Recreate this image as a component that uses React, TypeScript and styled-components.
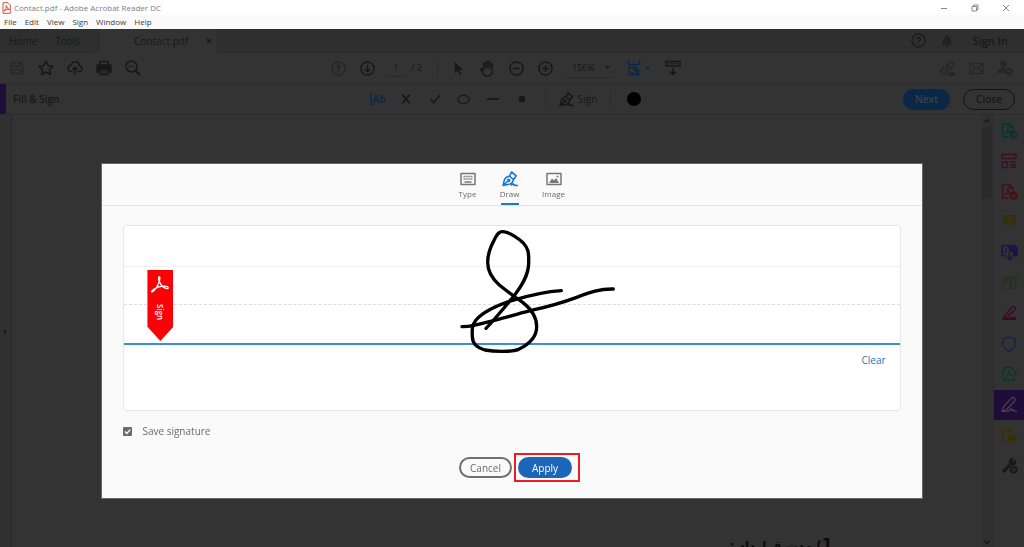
import React from "react";
import styled, { createGlobalStyle } from "styled-components";

const ink = "#181818";
const faint = "#262626";
const blue = "#0b2748";

const GlobalStyle = createGlobalStyle`
  * { box-sizing: border-box; }
  body {
    margin: 0;
    background: #333;
    font-family: "Open Sans", "Noto Sans", "Liberation Sans", sans-serif;
    font-size: 10px;
    line-height: 14px;
    overflow: hidden;
  }
  button, input, select {
    font: inherit;
    color: inherit;
    border: 0;
    padding: 0;
    margin: 0;
    background: none;
  }
  svg { display: block; flex: none; }
`;

const Shell = styled.div`
  display: flex;
  flex-direction: column;
  height: 100vh;
  color: ${ink};
`;

const TitleBar = styled.header`
  display: flex;
  align-items: center;
  gap: 3px;
  height: 15px;
  padding: 0 14px 0 2px;
  background: #fff;
  color: #7d7d7d;
`;

const AppTitle = styled.h1`
  flex: 1;
  margin: 0;
  font-size: 8px;
  font-weight: 400;
`;

const WindowControls = styled.div`
  display: flex;
  gap: 23px;
  color: #888;
`;

const MenuBar = styled.nav`
  display: flex;
  align-items: center;
  gap: 8px;
  height: 14px;
  padding: 0 4px;
  background: #fafafa;
  color: #3c3c3c;
  font-size: 8px;
`;

const TabBar = styled.nav`
  display: flex;
  align-items: stretch;
  height: 24px;
  background: #2f2f2f;
`;

const NavTab = styled.button`
  padding: 0 9px;
  border-bottom: 1px solid #2a2a2a;
`;

const DocTab = styled.div`
  display: flex;
  align-items: center;
  justify-content: space-between;
  width: 120px;
  margin-left: 9px;
  padding: 0 5px 0 35px;
  background: #333;
  border-left: 1px solid #2a2a2a;
  border-right: 1px solid #2a2a2a;
`;

const Account = styled.div`
  display: flex;
  flex: 1;
  align-items: center;
  justify-content: flex-end;
  gap: 8px;
  padding-right: 16px;
  border-bottom: 1px solid #2a2a2a;
`;

const SignIn = styled.button`
  margin-left: 8px;
  font-size: 11px;
  font-weight: 600;
`;

const Bar = styled.div<{ $height: number }>`
  display: grid;
  grid-template-columns: 1fr auto 1fr;
  align-items: center;
  height: ${(p) => p.$height}px;
  border-bottom: 1px solid #2c2c2c;
`;

const Group = styled.div<{ $place: "left" | "center" | "right" }>`
  display: flex;
  align-items: center;
  gap: 9px;
  justify-content: ${(p) => (p.$place === "right" ? "flex-end" : "flex-start")};
  padding-left: ${(p) => (p.$place === "left" ? 7 : 0)}px;
  padding-right: ${(p) => (p.$place === "right" ? 9 : p.$place === "center" ? 13 : 0)}px;
`;

const ToolButton = styled.button<{ $color?: string; $width?: number }>`
  display: flex;
  align-items: center;
  justify-content: center;
  gap: 4px;
  min-width: ${(p) => p.$width ?? 20}px;
  height: 20px;
  color: ${(p) => p.$color ?? ink};
`;

const Divider = styled.span<{ $space: number }>`
  width: 1px;
  height: 19px;
  margin: 0 ${(p) => p.$space}px;
  background: #2b2b2b;
`;

const PageCount = styled.label`
  display: flex;
  align-items: center;
  gap: 5px;
  width: 41px;
  font-size: 9px;
  white-space: nowrap;
`;

const PageInput = styled.input`
  width: 20px;
  height: 18px;
  text-align: center;
  border-bottom: 1px solid #292929;
`;

const ZoomField = styled.label`
  display: flex;
  align-items: center;
  width: 50px;
  border-bottom: 1px solid #292929;
`;

const ZoomSelect = styled.select`
  appearance: none;
  width: 41px;
  height: 18px;
  padding-left: 8px;
  font-size: 9px;
`;

const BarTitle = styled.h2`
  display: flex;
  align-items: center;
  align-self: stretch;
  margin: 0;
  padding-left: 7px;
  border-left: 6px solid #1f0c38;
  font-size: 10px;
  font-weight: 600;
`;

const Pill = styled.button<{ $kind: "next" | "close" | "cancel" | "apply" }>`
  height: 21px;
  border-radius: 11px;
  font-size: 10px;
  line-height: 16px;
  ${(p) =>
    ({
      next: `width: 47px; background: ${blue}; color: #3b4148; font-weight: 600;`,
      close: `width: 52px; margin-left: 4px; border: 1px solid #131313; font-weight: 600;`,
      cancel: `width: 53px; border: 2px solid #707070; color: #6a6a6a;`,
      apply: `width: 54px; background: #1b66b8; color: #fff;`,
    })[p.$kind]}
`;

const Workspace = styled.main`
  display: flex;
  flex: 1;
  min-height: 0;
`;

const PanelToggle = styled.button`
  width: 12px;
  background: #303030;
  border-right: 1px solid #2a2a2a;
  display: flex;
  align-items: center;
  justify-content: center;
`;

const Page = styled.article`
  flex: 1;
  overflow: hidden;
  padding: 417px 148px 0 0;
  font: 700 12px/26px "DejaVu Sans", sans-serif;
  color: #0c0c0c;
`;

const Heading = styled.p`
  margin: 0;
`;

const HeadingNumber = styled.span`
  font-size: 16px;
`;

const ScrollTrack = styled.div`
  display: flex;
  flex-direction: column;
  align-items: center;
  width: 13px;
  padding: 3px 0 2px;
  background: #303030;
  border-right: 1px solid #2b2b2b;
`;

const ScrollThumb = styled.div`
  width: 10px;
  height: 72px;
  margin: 3px 0 auto;
  background: #2a2a2a;
`;

const ToolRail = styled.aside`
  width: 30px;
`;

const ToolList = styled.div`
  display: flex;
  flex-direction: column;
  height: 366px;
`;

const RailButton = styled.button<{ $color: string; $active?: boolean }>`
  display: flex;
  flex: 1;
  align-items: center;
  justify-content: center;
  color: ${(p) => p.$color};
  background: ${(p) => (p.$active ? "#1f0c38" : "transparent")};
`;

const Overlay = styled.div`
  position: fixed;
  inset: 0;
  display: flex;
  align-items: flex-start;
  justify-content: center;
  padding-top: 164px;
`;

const Dialog = styled.section`
  width: 80%;
  background: #fafafa;
  color: #6a6a6a;
  box-shadow: 0 0 0 1px #666;
`;

const ModeTabs = styled.div`
  display: flex;
  justify-content: center;
  gap: 24px;
  height: 42px;
  padding-right: 1px;
  border-bottom: 1px solid #e4e4e4;
`;

const ModeTab = styled.button<{ $active?: boolean; $wide?: boolean }>`
  display: flex;
  flex-direction: column;
  align-items: center;
  gap: 1px;
  width: ${(p) => (p.$wide ? 22 : 18)}px;
  padding-top: 7px;
  font-size: 8px;
  line-height: 12px;
  border-bottom: 2px solid ${(p) => (p.$active ? "#1a78d6" : "transparent")};
  svg { color: ${(p) => (p.$active ? "#1a78d6" : "#777")}; }
`;

const DialogBody = styled.div`
  padding: 19px 21px 16px;
`;

const SignatureBox = styled.div`
  position: relative;
  height: 186px;
  background: #fff;
  border: 1px solid #e6e6e6;
  border-radius: 4px;
`;

const GuideRow = styled.div<{ $line: string; $height: number }>`
  height: ${(p) => p.$height}px;
  border-bottom: ${(p) => p.$line};
`;

const ClearRow = styled.div`
  display: flex;
  justify-content: flex-end;
  padding: 8px 14px;
`;

const ClearLink = styled.a`
  color: #2a73bb;
  text-decoration: none;
`;

const Ribbon = styled.div`
  position: absolute;
  left: 23px;
  top: 44px;
  display: flex;
  flex-direction: column;
  align-items: center;
  gap: 9px;
  width: 26px;
  height: 71px;
  padding-top: 5px;
  background: #fb0007;
  color: #fff;
  clip-path: polygon(0 0, 100% 0, 100% 80%, 50% 100%, 0 80%);
`;

const RibbonText = styled.span`
  writing-mode: vertical-rl;
  font-size: 8px;
  line-height: 10px;
  font-weight: 600;
`;

const Ink = styled.svg`
  position: absolute;
  left: calc(50% - 54px);
  top: 2px;
`;

const SaveLabel = styled.label`
  display: flex;
  align-items: center;
  gap: 10px;
  margin-top: 13px;
`;

const Checkbox = styled.input`
  appearance: none;
  width: 9px;
  height: 9px;
  border-radius: 1px;
  background: #6b6b6b
    url("data:image/svg+xml,%3Csvg xmlns='http://www.w3.org/2000/svg' viewBox='0 0 9 9'%3E%3Cpath d='M2 4.6 3.8 6.4 7.2 2.6' fill='none' stroke='white' stroke-width='1.4'/%3E%3C/svg%3E");
`;

const Actions = styled.div`
  display: flex;
  align-items: center;
  justify-content: center;
  gap: 2px;
  margin: 15px 0 0 15px;
`;

const Highlight = styled.div`
  display: flex;
  width: 66px;
  padding: 2px;
  border: 2px solid #ee1c25;
`;

type IconProps = { size?: number; width?: number; sw?: number; vb?: string; children: React.ReactNode };
const Icon = ({ size = 16, width, sw = 1.5, vb = "0 0 16 16", children }: IconProps) => (
  <svg width={width ?? size} height={size} viewBox={vb} fill="none" stroke="currentColor" strokeWidth={sw} strokeLinejoin="round" aria-hidden="true">
    {children}
  </svg>
);

const acrobat =
  "M3 20C6 18.500 10 12.500 11.300 7C12.200 3.300 11.800 2 11 2S9.700 4.500 11.500 8.500C13.400 12.700 17 16 20 16.400C22.500 16.600 22.700 14.200 19.500 13.700C15 13 8.500 14.500 4.500 17.200C1.500 19.300 1.500 21 3 20Z";
const AcrobatMark = ({ size, sw = 1.6 }: { size: number; sw?: number }) => (
  <Icon size={size} sw={sw} vb="0 0 24 24">
    <path d={acrobat} />
  </Icon>
);

const Caret = () => (
  <svg width="5" height="3" viewBox="0 0 5 3" fill="currentColor" aria-hidden="true">
    <path d="M0 0h5L2.500 3z" />
  </svg>
);

const Pen = ({ size }: { size: number }) => (
  <Icon size={size} sw={1.6}>
    <path d="M1 14.500 2.500 8.500Q3.500 6 7.500 5l4 3.500Q11 12 8 13L1 14.500 6 10M7.500 5 9.500 1l4.800 3.800L11.500 8.500" />
    <circle cx="6.700" cy="9.300" r="1.100" />
    <path d="M9 14.500c1-1.800 2.200-2 2.400-1.200s.8 1.300 1.600.5l.4.700H16" />
  </Icon>
);

const FileShape = ({ children }: { children?: React.ReactNode }) => (
  <Icon size={17} sw={1.5}>
    <path d="M7 14H1.500V1.500h6.500L11.500 5v3M8 1.500V5h3.500" />
    <path d="M3.500 11C5.500 9.500 6.500 7 6.200 5c.4 2.500 2 4 3.800 4-3 0-4.500.7-6.500 2z" strokeWidth="1" />
    {children}
  </Icon>
);

const railTools: { name: string; color: string; active?: boolean; icon: React.ReactNode }[] = [
  { name: "Export PDF", color: "#0a3430", icon: <FileShape><circle cx="12" cy="12" r="3.800" fill="currentColor" stroke="none" /><path d="M10 12h4M12.500 10.500 14 12l-1.500 1.500" stroke="#333" strokeWidth="1" /></FileShape> },
  { name: "Organize", color: "#3c0e29", icon: <Icon><path d="M1 1.500h14v4H1zM1 9h5.500v5.500H1zM9.500 9H15M9.500 11.700H15M9.500 14.300H15" /></Icon> },
  { name: "Create PDF", color: "#421216", icon: <FileShape><circle cx="12" cy="12" r="3.800" fill="currentColor" stroke="none" /><path d="M10 12h4M12 10v4" stroke="#333" strokeWidth="1" /></FileShape> },
  { name: "Comment", color: "#383000", icon: <Icon size={15}><path d="M1 1h14v10H9l-3.500 4v-4H1z" fill="currentColor" stroke="none" /><path d="M4 4.500h8M4 7.500h6" stroke="#333" /></Icon> },
  { name: "Combine", color: "#191747", icon: <Icon size={17}><path d="M5 11H1V1.500h7v5M11 11h4V3.500L13 1.500H8.500M8 8v6.500M5.500 12 8 14.800l2.500-2.800" /><path d="M9 2h4l2 2v6h-3V7H9z" fill="currentColor" /><path d="M3 8.500Q5.500 6.500 5 3.500" strokeWidth="1" /></Icon> },
  { name: "Compress", color: "#1d3512", icon: <Icon size={15}><path d="M10 1.500h4.500v13H10z" /><path d="M1.500 8H8v6.500H1.500z" strokeDasharray="2 1" /><path d="M8 3H3.500v3M1.500 4.500l2 2 2-2" /></Icon> },
  { name: "Redact", color: "#400827", icon: <Icon><path d="M3 11.500 11 2q1.500-1 2.700 0t.3 2.700L6 12.500H3z" /><path d="M1 14.500 2.500 12H6l2 1.500 1-1.500h6v3H1z" fill="currentColor" stroke="none" /></Icon> },
  { name: "Protect", color: "#201f4a", icon: <Icon><path d="M8 1q3 1.700 6 1.700v5Q14 12.500 8 15 2 12.500 2 7.700v-5Q5 2.700 8 1z" /></Icon> },
  { name: "Optimize", color: "#0a3430", icon: <Icon><path d="M3 5V1.500h7.500L13 4v1M3 11v3.500h10V11M.5 5.500 3 8 .5 10.500M15.500 5.500 13 8l2.500 2.500" /><path d="M5 11Q8 8.500 8 5q.5 3.500 3.500 4.500Q8 9 5 11z" strokeWidth="1" /></Icon> },
  { name: "Fill & Sign", color: "#47404e", active: true, icon: <Icon size={17} sw={1.3}><path d="M1 14.500 2.500 10 10 2q1.500-1.200 2.700 0t.2 2.700L5.500 12.500 1 14.500h6c2-3 3-3 3-1.500s1 1 1.700 0c.3 1.500 1 1.500 3.300 1.300" /></Icon> },
  { name: "Send for Comments", color: "#383000", icon: <Icon><path d="M7 14.500H1.500v-13H7L10 4.500V8M7 1.500v3h3" /><path d="M8 9h7v4h-2.500L11 15v-2H8z" fill="currentColor" /></Icon> },
  { name: "More Tools", color: ink, icon: <Icon size={17}><path d="M2 14 8.500 7.500" strokeWidth="3" /><path d="M13.500 3 11.500 5 10 3.500l2-2q-3-.8-4 1.500T9 7t4 0 .5-4z" fill="currentColor" strokeWidth=".8" /><circle cx="12" cy="12" r="4" fill="currentColor" stroke="#333" strokeWidth=".6" /><path d="M10 12h4M12 10v4" stroke="#333" strokeWidth="1" /></Icon> },
];

export default function App() {
  return (
    <>
      <GlobalStyle />
      <Shell>
        <TitleBar>
          <svg width="9" height="12" viewBox="0 0 9 12" fill="none" stroke="#e2483d" aria-hidden="true">
            <path d="M1 .7h5L8.300 3v8.300H1z" fill="#fff" />
            <path d="M2 9Q4.500 7 4.300 3.500 5 7 7.500 7.500 4.500 7 2 9z" />
          </svg>
          <AppTitle>Contact.pdf - Adobe Acrobat Reader DC</AppTitle>
          <WindowControls>
            <button aria-label="Minimize"><Icon size={8} sw={1} vb="0 0 8 8"><path d="M1 4.500h6" /></Icon></button>
            <button aria-label="Restore"><Icon size={8} sw={1} vb="0 0 8 8"><path d="M1 2.500h4.500V7H1zM2.500 2.500V1H7v4.500H5.500" /></Icon></button>
            <button aria-label="Close window"><Icon size={8} sw={1} vb="0 0 8 8"><path d="m1 1 6 6M7 1 1 7" /></Icon></button>
          </WindowControls>
        </TitleBar>
        <MenuBar>
          {["File", "Edit", "View", "Sign", "Window", "Help"].map((m) => (
            <button key={m}>{m}</button>
          ))}
        </MenuBar>
        <TabBar>
          <NavTab>Home</NavTab>
          <NavTab>Tools</NavTab>
          <DocTab>
            <span>Contact.pdf</span>
            <button aria-label="Close tab"><Icon size={6} sw={1.2} vb="0 0 6 6"><path d="m1 1 4 4M5 1 1 5" /></Icon></button>
          </DocTab>
          <Account>
            <ToolButton aria-label="Help">
              <Icon size={15} sw={1.3}><circle cx="8" cy="8" r="7" /><path d="M6 6.500Q6 4.700 8 4.700t2 1.700Q10 7.500 8 8.700v1M8 10.700v1.400" /></Icon>
            </ToolButton>
            <ToolButton aria-label="Notifications" $color="#222">
              <Icon size={14}><path d="M1.500 12.500q2-1.500 2-5T7 3V1h2v2q3.500 1 3.500 4.500t2 5zM6 13.500h4q-.5 2-2 2t-2-2z" fill="currentColor" stroke="none" /></Icon>
            </ToolButton>
            <SignIn>Sign In</SignIn>
          </Account>
        </TabBar>

        <Bar $height={31}>
          <Group $place="left">
            <ToolButton aria-label="Save" $color={faint}><Icon size={14}><path d="M1.500 1.500h10l3 3v10h-13zM4.500 1.500V6h6V1.500M4 14.500V9.500h8v5" /></Icon></ToolButton>
            <ToolButton aria-label="Favourite"><Icon><path d="m8 1 2.100 4.700 5.100.5-3.900 3.400 1.200 5L8 12l-4.500 2.600 1.200-5L.8 6.200l5.100-.5z" /></Icon></ToolButton>
            <ToolButton aria-label="Upload"><Icon><path d="M5.500 11.500H4Q1 11 1 8.300T4 5.400Q5 1.700 8.500 1.700T12.500 6q2.600.3 2.600 2.800T12 11.500h-1.500M8 15V7.500M5.500 9.700 8 7.200l2.500 2.500" /></Icon></ToolButton>
            <ToolButton aria-label="Print"><Icon><path d="M4 5V1.500h8V5" /><path d="M1 5h14v7H1z" fill="currentColor" /><path d="M4 9.500h8v5H4z" fill="#333" /><path d="M6 11h4M6 12.800h4" strokeWidth=".9" /></Icon></ToolButton>
            <ToolButton aria-label="Find"><Icon><circle cx="6.500" cy="6.500" r="5.500" /><path d="m10.500 10.500 4.700 4.700" strokeWidth="2" /><path d="M3.700 6.500h5.600" strokeDasharray="1.300 .8" /></Icon></ToolButton>
          </Group>
          <Group $place="center">
            <ToolButton aria-label="Previous page" $color={faint}><Icon size={15}><circle cx="8" cy="8" r="7" /><path d="M8 12V4.500M5 7.500l3-3 3 3" /></Icon></ToolButton>
            <ToolButton aria-label="Next page"><Icon size={15}><circle cx="8" cy="8" r="7" /><path d="M8 4v7.500M5 8.500l3 3 3-3" /></Icon></ToolButton>
            <PageCount><PageInput defaultValue="1" aria-label="Page" /> / 2</PageCount>
            <Divider $space={1} />
            <ToolButton aria-label="Select"><Icon size={15}><path d="M4 1v12l3-2.700 2 4.500 1.800-.8-2-4.400H13z" fill="currentColor" stroke="none" /></Icon></ToolButton>
            <ToolButton aria-label="Pan"><Icon size={17} sw={1.300}><path d="M4.500 9.500V3.500q.9-1.300 1.900 0V7.500 2q1-1.300 2 0v5.500V2.200q1-1.200 2 0V8 4q1-1 2 0v6.500q0 4.500-4.500 4.500-3 0-4-2.500L1.700 9.200q0-1.500 1.600-.8z" /></Icon></ToolButton>
            <ToolButton aria-label="Zoom out"><Icon size={15}><circle cx="8" cy="8" r="7" /><path d="M4.500 8h7" /></Icon></ToolButton>
            <ToolButton aria-label="Zoom in"><Icon size={15}><circle cx="8" cy="8" r="7" /><path d="M4.500 8h7M8 4.500v7" /></Icon></ToolButton>
            <ZoomField><ZoomSelect aria-label="Zoom level"><option>156%</option></ZoomSelect><Caret /></ZoomField>
            <ToolButton aria-label="Fit width" $color={blue} $width={31}>
              <Icon size={17} width={14} vb="0 0 14 17"><path d="M1.500 0v4.500h11V0M2 16V7.500h6.500l3 3V16M8 7.500v3.500h3.500M4 14h6.500M5.500 12.500 4 14l1.500 1.500M9 12.500l1.500 1.500L9 15.500" /></Icon>
              <Caret />
            </ToolButton>
            <ToolButton aria-label="Show toolbar"><Icon size={16}><path d="M1 1.500h14v4.500H1z" /><path d="M3.500 3.800h9" strokeDasharray="1.500 1" /><path d="M8 7.500V14M5 11.500l3 3 3-3" /></Icon></ToolButton>
          </Group>
          <Group $place="right">
            <ToolButton aria-label="Share link" $color={faint}><Icon size={17}><path d="m6 9.500 4-4M7 5.500l3-3q2-1.200 3.300 0t0 3.300l-3 3M8.500 10 6 12.500q-2 1.300-3.500 0t0-3.500L5 6.500" /><path d="M8.500 15q-1.200-2.500 1.300-3 1.700-3 3.700 0 2.500.2 2 3z" fill="currentColor" stroke="none" /></Icon></ToolButton>
            <ToolButton aria-label="Email" $color={faint}><Icon size={15}><path d="M1 2.500h14v11H1zL8 9l7-6.500M1 13.500 6 8M15 13.500 10 8" strokeWidth="1.200" /></Icon></ToolButton>
            <ToolButton aria-label="Share with people" $color={faint}><Icon size={16}><circle cx="6.500" cy="4" r="3.300" fill="currentColor" stroke="none" /><path d="M0 13q0-4 5-4.500V6h3v3l1 4z" fill="currentColor" stroke="none" /><circle cx="12" cy="11.500" r="3.800" fill="currentColor" stroke="none" /><path d="M10 11.500h4M12 9.500v4" stroke="#333" strokeWidth="1" /></Icon></ToolButton>
          </Group>
        </Bar>

        <Bar $height={31}>
          <BarTitle>Fill &amp; Sign</BarTitle>
          <Group $place="center">
            <ToolButton aria-label="Add text" $color={blue}>
              <svg width="18" height="14" viewBox="0 0 18 14" aria-hidden="true">
                <path d="M1 1.500h4M3 1.500v11M1 12.500h4" stroke="currentColor" strokeWidth="1.200" fill="none" />
                <text x="4.500" y="11" fontSize="10" fontWeight="700" fill="currentColor">Ab</text>
              </svg>
            </ToolButton>
            <ToolButton aria-label="Cross"><Icon size={10} sw={2.500}><path d="m2 1 12 14M14 1 2 15" /></Icon></ToolButton>
            <ToolButton aria-label="Check"><Icon size={12} sw={2.400}><path d="m2 8.500 4 4.500 8.500-10" /></Icon></ToolButton>
            <ToolButton aria-label="Circle"><Icon size={13}><ellipse cx="8" cy="8" rx="7" ry="5" /></Icon></ToolButton>
            <ToolButton aria-label="Line"><Icon size={12} sw={2.400}><path d="M0 8h16" /></Icon></ToolButton>
            <ToolButton aria-label="Dot"><Icon size={8} sw={0}><circle cx="8" cy="8" r="6.500" fill="currentColor" /></Icon></ToolButton>
            <Divider $space={4} />
            <ToolButton><Pen size={15} />Sign</ToolButton>
            <Divider $space={4} />
            <ToolButton aria-label="Colour" $color="#000"><Icon size={14} sw={0}><circle cx="8" cy="8" r="8" fill="currentColor" /></Icon></ToolButton>
          </Group>
          <Group $place="right">
            <Pill $kind="next">Next</Pill>
            <Pill $kind="close">Close</Pill>
          </Group>
        </Bar>

        <Workspace>
          <PanelToggle aria-label="Expand panel">
            <svg width="3" height="5" viewBox="0 0 3 5" fill={ink} aria-hidden="true"><path d="M0 0v5l3-2.500z" /></svg>
          </PanelToggle>
          <Page dir="rtl" lang="fa"><Heading><HeadingNumber>1</HeadingNumber>) مدت قرارداد :</Heading></Page>
          <ScrollTrack>
            <Icon size={6} sw={1.300} vb="0 0 6 6"><path d="m.5 4.500 2.500-3 2.500 3" /></Icon>
            <ScrollThumb />
            <Icon size={6} sw={1.300} vb="0 0 6 6"><path d="m.5 1.500 2.500 3 2.500-3" /></Icon>
          </ScrollTrack>
          <ToolRail>
            <ToolList>
              {railTools.map((t) => (
                <RailButton key={t.name} aria-label={t.name} $color={t.color} $active={t.active}>{t.icon}</RailButton>
              ))}
            </ToolList>
          </ToolRail>
        </Workspace>
      </Shell>

      <Overlay>
        <Dialog role="dialog" aria-label="Signature">
          <ModeTabs>
            <ModeTab>
              <Icon size={16}><path d="M1 2.500h14v11H1z" /><path d="M3.500 5.500h9M3.500 8h9" strokeDasharray="1.300 .6" /><path d="M4.500 11h7" /></Icon>
              Type
            </ModeTab>
            <ModeTab $active><Pen size={16} />Draw</ModeTab>
            <ModeTab $wide>
              <Icon size={16}><path d="M1 2.500h14v11H1z" /><path d="m3 12 3-4.500 2 2L10 7l3 5z" fill="currentColor" stroke="none" /><circle cx="11.500" cy="5.500" r="1" fill="currentColor" stroke="none" /></Icon>
              Image
            </ModeTab>
          </ModeTabs>
          <DialogBody>
            <SignatureBox>
              <GuideRow $height={41} $line="1px solid #efefef" />
              <GuideRow $height={38} $line="1px dashed #dcdcdc" />
              <GuideRow $height={40} $line="2px solid #3a8ddb" />
              <ClearRow><ClearLink href="#clear">Clear</ClearLink></ClearRow>
              <Ribbon><AcrobatMark size={20} /><RibbonText>Sign</RibbonText></Ribbon>
              <Ink width="160" height="127" viewBox="54 39 480 381" fill="none" stroke="#000" strokeWidth="10" strokeLinecap="round" strokeLinejoin="round" role="img" aria-label="Drawn signature">
                <path d="M138 340C160 318 195 275 218 248C248 210 265 180 266 145C267 110 264 100 250 84C238 72 208 50 186 50C176 50 171 58 162 76C150 98 143 118 143 142C143 170 155 190 178 210C205 232 225 246 248 262C275 283 290 305 290 335C290 368 262 390 236 403C215 411 165 411 135 405C108 396 98 386 97 365C96 345 95 332 108 315C130 290 175 270 215 257C265 242 315 230 364 227" />
                <path d="M66 335C80 335 90 334 100 331C155 320 215 302 270 287C325 275 370 262 410 247C450 232 480 221 520 222" />
              </Ink>
            </SignatureBox>
            <SaveLabel><Checkbox type="checkbox" defaultChecked />Save signature</SaveLabel>
            <Actions>
              <Pill $kind="cancel">Cancel</Pill>
              <Highlight><Pill $kind="apply">Apply</Pill></Highlight>
            </Actions>
          </DialogBody>
        </Dialog>
      </Overlay>
    </>
  );
}
